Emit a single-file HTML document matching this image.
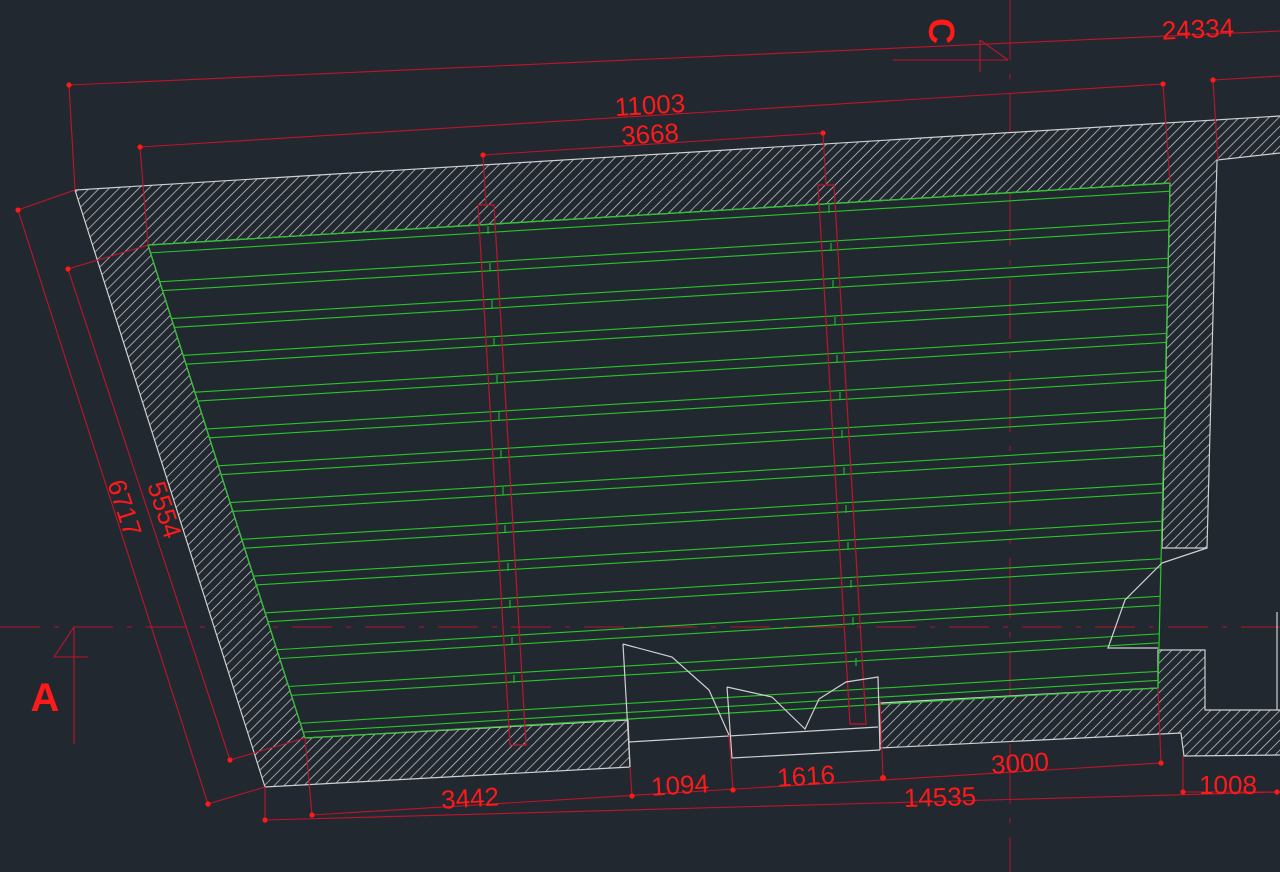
<!DOCTYPE html>
<html><head><meta charset="utf-8"><style>
html,body{margin:0;padding:0;background:#212830;}
svg{display:block}
text{font-family:"Liberation Sans",sans-serif;fill:#ff1a1a;}
</style></head><body>
<svg width="1280" height="872" viewBox="0 0 1280 872" xmlns="http://www.w3.org/2000/svg">
<defs>
<pattern id="h" patternUnits="userSpaceOnUse" width="7" height="7" patternTransform="rotate(45)">
<rect width="7" height="7" fill="#212830"/>
<line x1="0" y1="0" x2="0" y2="7" stroke="#cfcfcf" stroke-width="1.4"/>
</pattern>
<clipPath id="inner"><polygon points="148,245 1170,183 1158,688 305,738"/></clipPath>
</defs>
<rect width="1280" height="872" fill="#212830"/>

<g stroke="#b3142a" stroke-width="1" fill="none">
<line x1="0" y1="627" x2="1280" y2="627" stroke-dasharray="40 14 5 14"/>
<line x1="1010" y1="0" x2="1010" y2="872" stroke-dasharray="60 14 5 14"/>
</g>

<g fill="url(#h)" stroke="none">
<polygon points="75,190 1280,116 1280,153 1217,160 1207,548 1162,548 1170,183 148,245"/>
<polygon points="75,190 148,245 305,738 628,720 630,767 265,787"/>
<polygon points="880,703 1158,688 1158,650 1205,650 1205,710 1280,710 1280,755 1184,756 1181,733 880,748"/>
</g>
<g fill="none" stroke="#d0d0d0" stroke-width="1.2">
<polyline points="1280,116 75,190 265,787 630,767 628,720 305,738 148,245 1170,183 1162,548 1207,548 1217,160 1280,153"/>
<polyline points="1280,710 1205,710 1205,650 1158,650 1158,688 880,703 880,748 1181,733 1184,756 1280,755"/>
</g>

<g clip-path="url(#inner)" stroke="#2bc42b" stroke-width="1.1">
<line x1="100" y1="247.9" x2="1300" y2="175.3"/>
<line x1="100" y1="255.9" x2="1300" y2="183.3"/>
<line x1="100" y1="285.4" x2="1300" y2="212.8"/>
<line x1="100" y1="294.4" x2="1300" y2="221.8"/>
<line x1="100" y1="322.9" x2="1300" y2="250.3"/>
<line x1="100" y1="331.9" x2="1300" y2="259.3"/>
<line x1="100" y1="360.4" x2="1300" y2="287.8"/>
<line x1="100" y1="369.4" x2="1300" y2="296.8"/>
<line x1="100" y1="397.9" x2="1300" y2="325.3"/>
<line x1="100" y1="406.9" x2="1300" y2="334.3"/>
<line x1="100" y1="435.4" x2="1300" y2="362.8"/>
<line x1="100" y1="444.4" x2="1300" y2="371.8"/>
<line x1="100" y1="472.9" x2="1300" y2="400.3"/>
<line x1="100" y1="481.9" x2="1300" y2="409.3"/>
<line x1="100" y1="510.4" x2="1300" y2="437.8"/>
<line x1="100" y1="519.4" x2="1300" y2="446.8"/>
<line x1="100" y1="547.9" x2="1300" y2="475.3"/>
<line x1="100" y1="556.9" x2="1300" y2="484.3"/>
<line x1="100" y1="585.4" x2="1300" y2="512.8"/>
<line x1="100" y1="594.4" x2="1300" y2="521.8"/>
<line x1="100" y1="622.9" x2="1300" y2="550.3"/>
<line x1="100" y1="631.9" x2="1300" y2="559.3"/>
<line x1="100" y1="660.4" x2="1300" y2="587.8"/>
<line x1="100" y1="669.4" x2="1300" y2="596.8"/>
<line x1="100" y1="697.9" x2="1300" y2="625.3"/>
<line x1="100" y1="706.9" x2="1300" y2="634.3"/>
<line x1="100" y1="735.4" x2="1300" y2="662.8"/>
<line x1="100" y1="744.4" x2="1300" y2="671.8"/>
</g>
<polyline points="148,245 1170,183 1158,688 305,738 148,245" fill="none" stroke="#2bc42b" stroke-width="1.2"/>

<g stroke="#c0142a" stroke-width="1.2" fill="none">
<polygon points="478,205 494,205 526,745 510,745"/>
<polygon points="818,185 834,185 866,724 850,724"/>
</g>
<g stroke="#2bc42b" stroke-width="1">
<line x1="488" y1="226" x2="488" y2="234"/><line x1="490" y1="263" x2="490" y2="271"/><line x1="492" y1="300" x2="492" y2="308"/><line x1="494" y1="338" x2="494" y2="346"/><line x1="497" y1="375" x2="497" y2="383"/><line x1="499" y1="412" x2="499" y2="420"/><line x1="501" y1="450" x2="501" y2="458"/><line x1="503" y1="487" x2="503" y2="495"/><line x1="505" y1="525" x2="505" y2="533"/><line x1="508" y1="563" x2="508" y2="571"/><line x1="510" y1="600" x2="510" y2="608"/><line x1="512" y1="637" x2="512" y2="645"/><line x1="514" y1="675" x2="514" y2="683"/>
<line x1="829" y1="205" x2="829" y2="213"/><line x1="831" y1="243" x2="831" y2="251"/><line x1="833" y1="280" x2="833" y2="288"/><line x1="835" y1="317" x2="835" y2="325"/><line x1="837" y1="355" x2="837" y2="363"/><line x1="840" y1="392" x2="840" y2="400"/><line x1="842" y1="430" x2="842" y2="438"/><line x1="844" y1="467" x2="844" y2="475"/><line x1="846" y1="505" x2="846" y2="513"/><line x1="848" y1="542" x2="848" y2="550"/><line x1="851" y1="580" x2="851" y2="588"/><line x1="853" y1="617" x2="853" y2="625"/><line x1="856" y1="658" x2="856" y2="666"/>
</g>

<g stroke="#d0d0d0" stroke-width="1.2" fill="none">
<polyline points="623,644 672,657 709,690 729,735"/>
<line x1="623" y1="644" x2="630" y2="767"/>
<line x1="629" y1="742" x2="878" y2="727"/>
<polyline points="727,687 772,697 805,729 819,699 846,682 878,677 880,750"/>
<polyline points="727,687 732,758 880,750"/>
<polyline points="1162,563 1207,548"/>
<polyline points="1162,563 1125,600 1108,648 1158,648"/>
<line x1="1277" y1="612" x2="1277" y2="710"/>
</g>

<g stroke="#c0142a" stroke-width="1.1" fill="none">
<line x1="69" y1="85" x2="1280" y2="31"/>
<line x1="69" y1="85" x2="75" y2="190"/>
<line x1="140" y1="147" x2="1163" y2="84"/>
<line x1="140" y1="147" x2="148" y2="245"/>
<line x1="1163" y1="84" x2="1170" y2="183"/>
<line x1="483" y1="155" x2="823" y2="133"/>
<line x1="483" y1="155" x2="486" y2="205"/>
<line x1="823" y1="133" x2="826" y2="185"/>
<line x1="1213" y1="80" x2="1280" y2="76"/>
<line x1="1213" y1="80" x2="1218" y2="160"/>
<line x1="18" y1="210" x2="208" y2="804"/>
<line x1="18" y1="210" x2="75" y2="190"/>
<line x1="68" y1="269" x2="230" y2="760"/>
<line x1="68" y1="269" x2="148" y2="245"/>
<line x1="230" y1="760" x2="305" y2="738"/>
<line x1="208" y1="804" x2="265" y2="787"/>
<line x1="265" y1="820" x2="1280" y2="792"/>
<line x1="265" y1="787" x2="265" y2="820"/>
<line x1="312" y1="815" x2="1161" y2="763"/>
<line x1="305" y1="738" x2="312" y2="815"/>
<line x1="630" y1="767" x2="632" y2="796"/>
<line x1="729" y1="735" x2="733" y2="790"/>
<line x1="880" y1="700" x2="883" y2="778"/>
<line x1="1158" y1="688" x2="1161" y2="763"/>
<line x1="1183" y1="756" x2="1183" y2="792"/>
<line x1="1183" y1="792" x2="1280" y2="792"/>
<line x1="893" y1="60" x2="1008" y2="60"/>
<polyline points="980,40 980,72"/>
<polyline points="980,40 1008,60"/>
<line x1="74" y1="627" x2="74" y2="744"/>
<line x1="54" y1="657" x2="88" y2="657"/>
<line x1="54" y1="657" x2="74" y2="627"/>
</g>
<g fill="#ff1a1a">
<circle cx="69" cy="85" r="2.6"/><circle cx="140" cy="147" r="2.6"/><circle cx="483" cy="155" r="2.6"/><circle cx="823" cy="133" r="2.6"/><circle cx="1163" cy="84" r="2.6"/><circle cx="1213" cy="80" r="2.6"/>
<circle cx="18" cy="210" r="2.6"/><circle cx="68" cy="269" r="2.6"/><circle cx="230" cy="760" r="2.6"/><circle cx="208" cy="804" r="2.6"/>
<circle cx="265" cy="820" r="2.6"/><circle cx="312" cy="815" r="2.6"/><circle cx="632" cy="796" r="2.6"/><circle cx="733" cy="790" r="2.6"/><circle cx="883" cy="778" r="3"/><circle cx="1161" cy="763" r="2.6"/><circle cx="1183" cy="792" r="2.6"/><circle cx="1277" cy="792" r="2.6"/>
</g>

<g font-size="26">
<text x="1198" y="38" text-anchor="middle" transform="rotate(-2.5 1198 30)">24334</text>
<text x="650" y="114" text-anchor="middle" transform="rotate(-3.4 650 105)">11003</text>
<text x="650" y="143" text-anchor="middle" transform="rotate(-3.6 650 134)">3668</text>
<text x="470" y="807" text-anchor="middle" transform="rotate(-3.4 470 798)">3442</text>
<text x="680" y="794" text-anchor="middle" transform="rotate(-3.4 680 785)">1094</text>
<text x="806" y="785" text-anchor="middle" transform="rotate(-3.4 806 776)">1616</text>
<text x="1020" y="772" text-anchor="middle" transform="rotate(-3.4 1020 763)">3000</text>
<text x="940" y="806" text-anchor="middle" transform="rotate(-1.6 940 797)">14535</text>
<text x="1228" y="794" text-anchor="middle">1008</text>
<text x="118" y="512" text-anchor="middle" transform="rotate(72 118 510)">6717</text>
<text x="158" y="514" text-anchor="middle" transform="rotate(72 158 512)">5554</text>
</g>
<text x="45" y="711" font-size="40" font-weight="bold" text-anchor="middle">A</text>
<text x="942" y="44" font-size="36" font-weight="bold" text-anchor="middle" transform="rotate(90 942 31)">C</text>
</svg>
</body></html>
